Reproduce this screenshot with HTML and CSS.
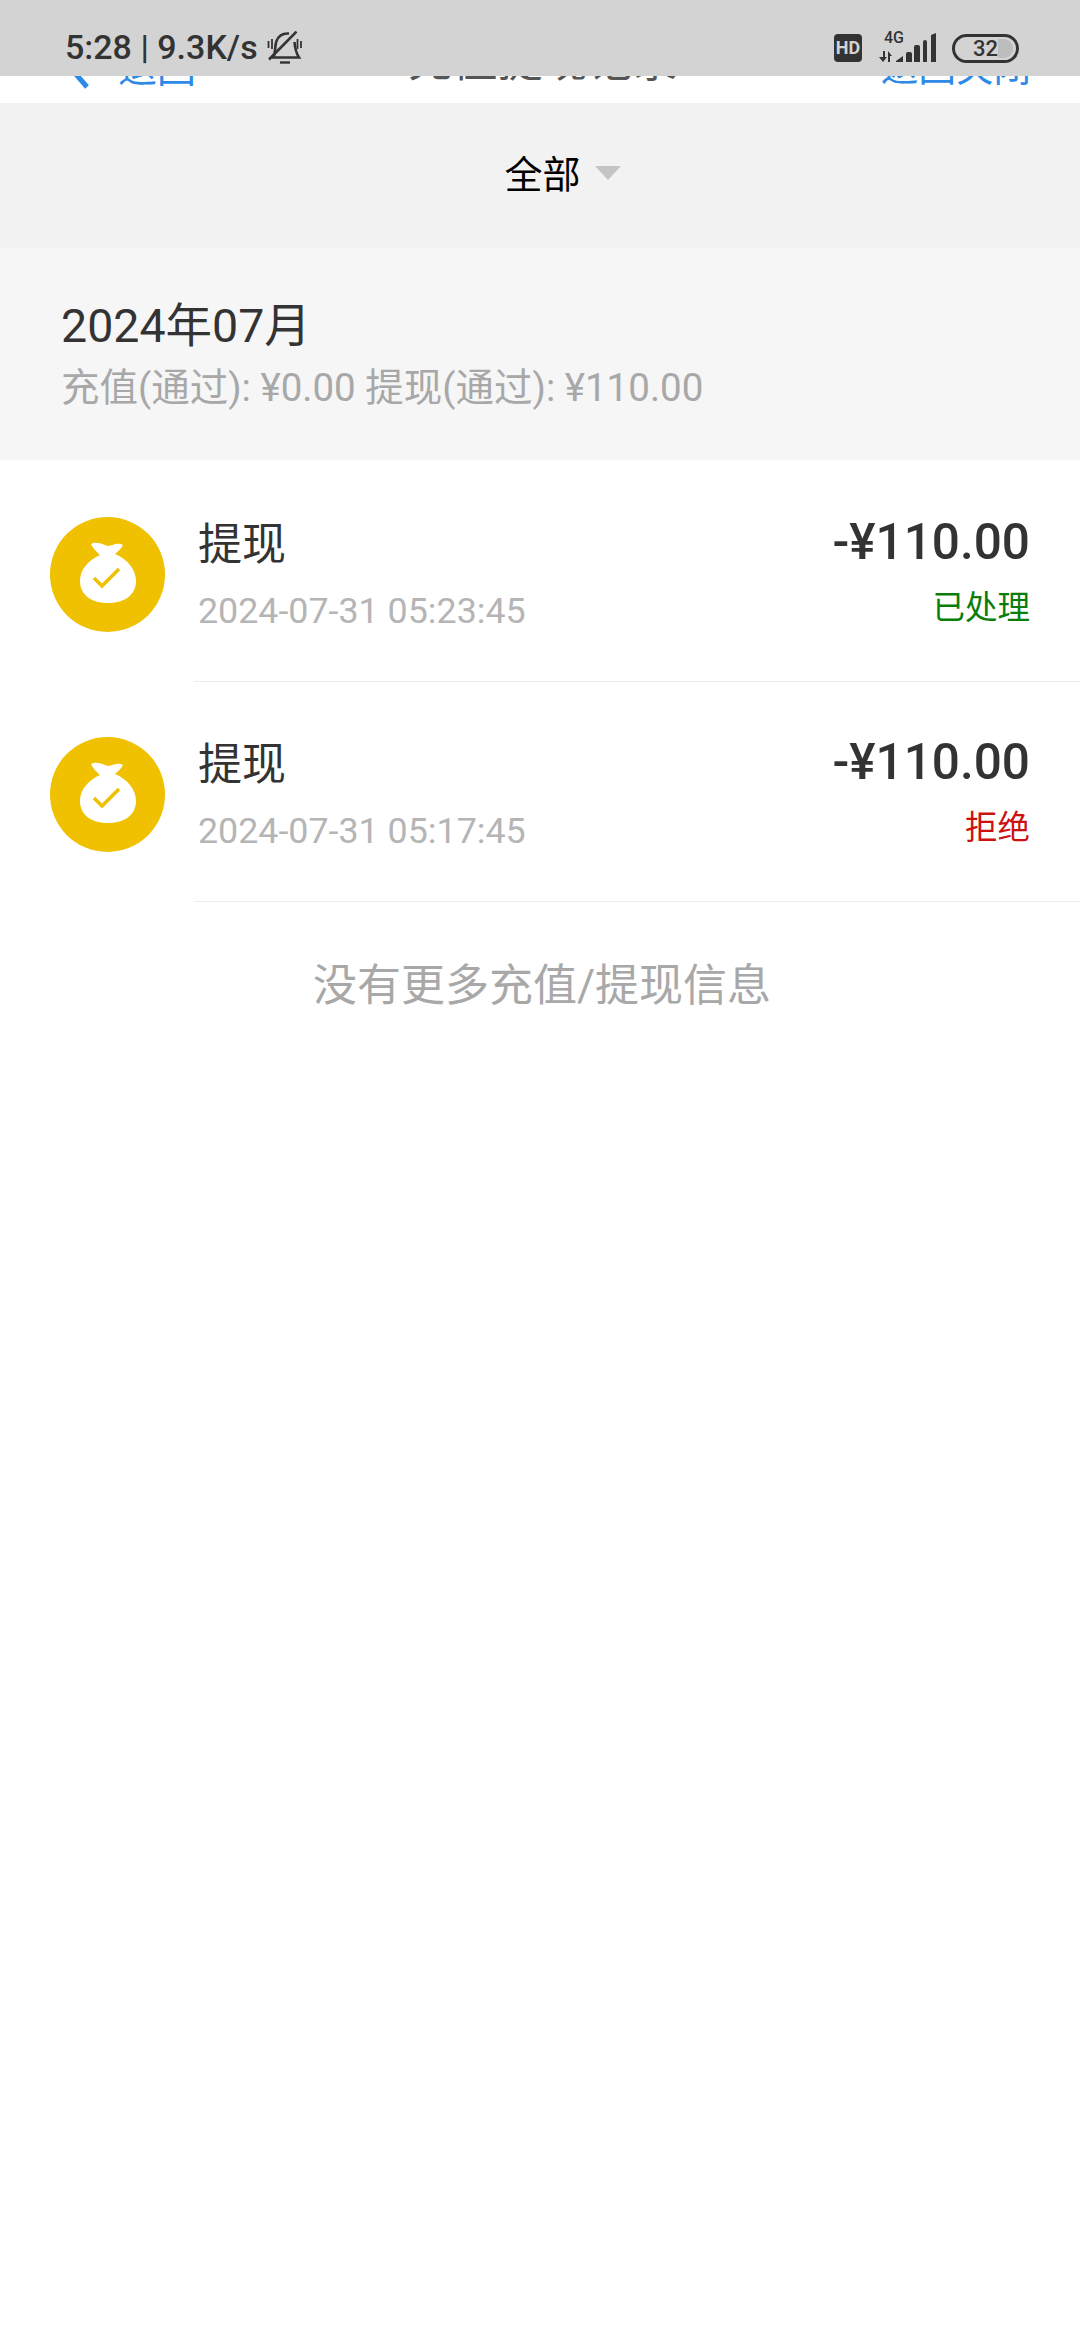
FILE: index.html
```html
<!DOCTYPE html>
<html lang="zh-CN">
<head>
  <meta charset="UTF-8" />
  <meta name="viewport" content="width=device-width, initial-scale=1.0" />
  <title>充值提现记录</title>
  <link rel="stylesheet" href="styles.css">
</head>

<body>
  <div class="status-bar">
    <div class="status-left">
      <span>5:28 | 9.3K/s</span>
      <svg class="bell" viewBox="0 0 35 33" fill="none" stroke="#333" stroke-width="2.6">
        <path d="M6.5 26C9 21 7.500 15 9.500 10 11.500 5 16 2 22 2.500" />
        <path d="M27.500 11C28 17 29 22 32 26.500H5" />
        <path d="M13 31.500h10" stroke-width="2.4" />
        <path d="M2 28.500 29.500 .6" />
        <path d="M1.500 10v7M5 8v10M30.500 8v10M34 10v7" stroke-width="1.800" />
      </svg>
    </div>
    <div class="status-right">
      <span class="hd">HD</span>
      <div class="network">
        <span class="net-4g">4G</span>
        <svg class="signal" viewBox="0 0 57 30" fill="#333">
          <path d="M4 18h2v6h2l-4 5-4-5h4zM9 29V18l4 5h-2v6z" />
          <path d="M17 29v-1l7-5v6zM27 21q0-2 2-2h2q2 0 2 2v8h-6zM35 14q0-2 2-2h2q2 0 2 2v15h-6zM44 9q0-2 2-2t2 2v20h-4zM52 2l5-2v29h-5z" />
        </svg>
      </div>
      <div class="battery"><span class="battery-fill"></span><span class="battery-num">32</span></div>
    </div>
  </div>

  <div class="nav">
    <div class="nav-back">
      <svg class="chevron" viewBox="0 0 26 50" fill="none" stroke="#2e8ae6" stroke-width="5">
        <path d="M23 3 4 25l19 22" />
      </svg>
      <span>退回</span>
    </div>
    <div class="nav-title">充值提现记录</div>
    <div class="nav-close">返回关闭</div>
  </div>

  <div class="filter">
    <span>全部</span>
    <span class="caret"></span>
  </div>

  <div class="month">
    <div class="month-title">2024年07月</div>
    <div class="month-sum">充值(通过): ¥0.00 提现(通过): ¥110.00</div>
  </div>

  <div class="row">
    <svg class="row-icon" viewBox="0 0 115 115">
      <circle cx="57.5" cy="57.5" r="57.5" fill="#efc100" />
      <path fill="#fff" d="M41 27C46 24 52 27 58 29 63 28 68 25 73 28 71 32 68 34 65 37 77 42 86 52 86 64 86 79 73 86 58 86 43 86 30 79 30 64 30 52 39 43 50 38 47 35 43 32 41 27z" />
      <path fill="none" stroke="#efc100" stroke-width="3.500" d="M44 61l8 8 17-17" />
    </svg>
    <div class="row-body">
      <div class="row-left">
        <div class="row-title">提现</div>
        <div class="row-date">2024-07-31 05:23:45</div>
      </div>
      <div class="row-right">
        <div class="row-amount">-¥110.00</div>
        <div class="row-status ok">已处理</div>
      </div>
    </div>
  </div>

  <div class="row">
    <svg class="row-icon" viewBox="0 0 115 115">
      <circle cx="57.5" cy="57.5" r="57.5" fill="#efc100" />
      <path fill="#fff" d="M41 27C46 24 52 27 58 29 63 28 68 25 73 28 71 32 68 34 65 37 77 42 86 52 86 64 86 79 73 86 58 86 43 86 30 79 30 64 30 52 39 43 50 38 47 35 43 32 41 27z" />
      <path fill="none" stroke="#efc100" stroke-width="3.500" d="M44 61l8 8 17-17" />
    </svg>
    <div class="row-body">
      <div class="row-left">
        <div class="row-title">提现</div>
        <div class="row-date">2024-07-31 05:17:45</div>
      </div>
      <div class="row-right">
        <div class="row-amount">-¥110.00</div>
        <div class="row-status no">拒绝</div>
      </div>
    </div>
  </div>

  <div class="no-more">没有更多充值/提现信息</div>
</body>
</html>
```

FILE: styles.css
```css
body {
  font-family: Roboto, "Noto Sans CJK SC", sans-serif;
  background-color: #ffffff;
  margin: 0;
}

/* status bar sits over the top of the nav */
.status-bar {
  position: absolute;
  top: 0;
  left: 0;
  right: 0;
  height: 76px;
  background-color: #d3d3d3;
  color: #333;
  display: flex;
  justify-content: space-between;
  align-items: center;
  padding: 0 61px 0 65px;
  box-sizing: border-box;
}

.status-left {
  display: flex;
  align-items: center;
  gap: 9px;
  font-size: 34px;
  font-weight: 500;
  padding-top: 18px;
}

.bell {
  width: 35px;
  height: 33px;
}

.status-right {
  display: flex;
  align-items: center;
  padding-top: 20px;
}

.hd {
  width: 28px;
  height: 28px;
  background: #333;
  color: #d3d3d3;
  border-radius: 4px;
  font-size: 18px;
  font-weight: 700;
  line-height: 28px;
  text-align: center;
}

.network {
  position: relative;
  width: 57px;
  height: 30px;
  margin-left: 17px;
}

.net-4g {
  position: absolute;
  left: 5px;
  top: -3px;
  font-size: 16px;
  font-weight: 500;
  line-height: 16px;
}

.signal {
  display: block;
  width: 57px;
  height: 30px;
}

.battery {
  position: relative;
  width: 67px;
  height: 29px;
  margin-left: 16px;
  border: 3px solid #333;
  border-radius: 15px;
  box-sizing: border-box;
  overflow: hidden;
  text-align: center;
}

.battery-fill {
  position: absolute;
  top: 2px;
  bottom: 2px;
  left: 43px;
  right: 3px;
  background: #bdbdbd;
  border-radius: 0 9px 9px 0;
}

.battery-num {
  position: relative;
  font-size: 22px;
  font-weight: 500;
  line-height: 23px;
  display: block;
}

.nav {
  height: 103px;
  padding: 20px 49px 0 64px;
  box-sizing: border-box;
  display: flex;
  align-items: center;
  justify-content: space-between;
  color: #2e8ae6;
  font-size: 37.5px;
  overflow: hidden;
}

.nav-back {
  display: flex;
  align-items: center;
  gap: 28px;
  font-size: 39px;
  margin-top: 6px;
}

.chevron {
  width: 26px;
  height: 50px;
}

.nav-title {
  color: #555;
  font-size: 45px;
  margin-top: -8px;
  margin-left: 8px;
}

.nav-close {
  margin-top: 6px;
}

.filter {
  height: 145px;
  background-color: #f2f2f2;
  display: flex;
  align-items: center;
  justify-content: center;
  gap: 14px;
  font-size: 38px;
  color: #000;
  padding: 0 0 8px 45px;
  box-sizing: border-box;
}

.caret {
  width: 0;
  height: 0;
  border-left: 13px solid transparent;
  border-right: 13px solid transparent;
  border-top: 14px solid #c4c4c4;
  margin-top: 2px;
}

.month {
  height: 212px;
  background-color: #f6f6f6;
  padding: 48px 0 0 61px;
  box-sizing: border-box;
}

.month-title {
  color: #333;
  font-size: 46.5px;
  line-height: 60px;
}

.month-sum {
  color: #a8a8a8;
  font-size: 38.5px;
  line-height: 56px;
  margin-top: 4px;
}

.row {
  display: flex;
  height: 220px;
  padding-left: 50px;
}

.row-icon {
  flex: none;
  width: 115px;
  height: 115px;
  margin-top: 57px;
}

.row-body {
  flex: 1;
  display: flex;
  justify-content: space-between;
  margin: 0 0 -2px 29px;
  padding: 52px 50px 0 4px;
  border-bottom: 1px solid #ececec;
}

.row-left {
  padding-top: 3px;
}

.row-title {
  color: #333;
  font-size: 44px;
  line-height: 60px;
}

.row-date {
  color: #b5b5b5;
  font-size: 35.8px;
  line-height: 44px;
  margin-top: 14px;
}

.row-right {
  text-align: right;
}

.row-amount {
  color: #333;
  font-size: 49.5px;
  font-weight: 500;
  line-height: 60px;
}

.row-status {
  font-size: 32.5px;
  line-height: 44px;
  margin-top: 14px;
}

.ok {
  color: #0a7d0a;
}

.no {
  color: #cc1111;
}

.no-more {
  color: #a8a8a8;
  font-size: 44px;
  line-height: 60px;
  text-align: center;
  margin-top: 56px;
  padding-left: 4px;
}
```
